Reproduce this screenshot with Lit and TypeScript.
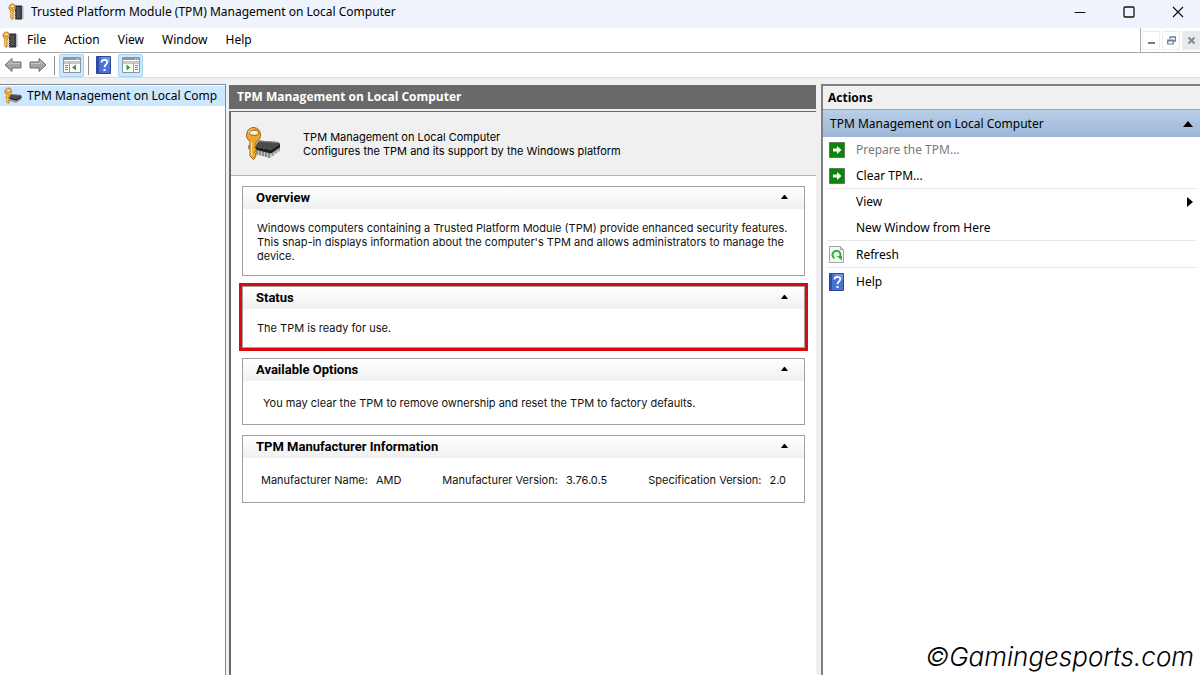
import { LitElement, html, css, svg, nothing } from "lit";
import { customElement, property, state } from "lit/decorators.js";

const key = svg`
  <path d="M9 1.500a7.500 7.500 0 0 0-4 13.800V30l3.500 3.500L11 30v-2l-1.500-1.500L11 24.500v-2L9.500 21 11 19.500v-3.700A7.500 7.500 0 0 0 9 1.500z" fill="#f0a62c" stroke="#9a6414" stroke-width="1"/>
  <path d="M6.500 16v13.500" stroke="#ffd98a" stroke-width="1.500"/>
  <path d="M3.500 7a5.500 5 0 0 1 5-4" fill="none" stroke="#ffe0a0" stroke-width="1.200"/>
  <ellipse cx="9" cy="6.800" rx="4.500" ry="2.600" fill="#f4efe4" stroke="#9a6414" stroke-width="1"/>`;

const keyChip = (size: number) => html`
  <svg width=${size} height=${size} viewBox="0 0 36 36" aria-hidden="true">
    <path d="M8 24l4 5 13 3 10-7v-3z" fill="#c4c4c4"/>
    <path d="M4 19v4M12 22v6M15 23v6M18 24v6M21 25v6M24 26v6" stroke="#777" stroke-width="1.500"/>
    <path d="M28 25v5M31 23v4M34 21v4" stroke="#8b8b8b" stroke-width="1.200"/>
    <path d="M14 14.500l19 1.500 2 1.500-9 6.500-16-3.500z" fill="#4a4a4d"/>
    <path d="M10 20.500l16 3.500 9-6.500v4l-9 6-16-4z" fill="#1f1f21"/>
    <path d="M14 15l19 1.500" stroke="#88888b"/>
    ${key}
  </svg>`;

const appIcon = html`
  <svg width="16" height="18" viewBox="0 0 32 36" aria-hidden="true">
    <path d="M14 5h14v28H14z" fill="#2b2b2d"/>
    <path d="M17 8h8v22h-8z" fill="#505054"/>
    <path d="M29 7v25" stroke="#77777a" stroke-width="4" stroke-dasharray="2 2"/>
    <path d="M14 18v14" stroke="#b4b4b4" stroke-width="3" stroke-dasharray="2 2"/>
    ${key}
  </svg>`;

const backArrow = html`
  <svg width="18" height="16" viewBox="0 0 18 16" aria-hidden="true">
    <path d="M1 8l7-6.500V5h9v6H8v3.500z" fill="#a3a3a3" stroke="#6f6f6f" stroke-linejoin="round"/>
    <path d="M3.500 7.500L7 4.200V6.500h9" fill="none" stroke="#c9c9c9"/>
  </svg>`;

const forwardArrow = html`
  <svg width="18" height="16" viewBox="0 0 18 16" aria-hidden="true">
    <path d="M17 8l-7-6.500V5H1v6h9v3.500z" fill="#a3a3a3" stroke="#6f6f6f" stroke-linejoin="round"/>
    <path d="M2 6.500h9V4.200l3.500 3.300" fill="none" stroke="#c9c9c9"/>
  </svg>`;

const paneIcon = (right: boolean) => html`
  <svg width="18" height="16" viewBox="0 0 18 16" aria-hidden="true">
    <path d="M.5.5h17v15H.5z" fill="#fff" stroke="#8d949c"/>
    <path d="M1 1h16v2H1z" fill="#8e969e"/>
    <path d="M13 2h1M15 2h1" stroke="#fff"/>
    <path d="M1 4.500h16" stroke="#c3c8ce"/>
    <path d="M1 6h16" stroke="#8d949c"/>
    ${right
      ? svg`<path d="M11.500 6v9" stroke="#8d949c"/>
          <path d="M13 8.500h3M13 10.500h3M13 12.500h3" stroke="#6f8296"/>
          <path d="M4.500 7.500v6L8.500 10.500z" fill="#2da32d"/>`
      : svg`<path d="M6.500 6v9" stroke="#8d949c"/>
          <path d="M2 8.500h3M2 10.500h3M2 12.500h3" stroke="#6f8296"/>
          <path d="M13 7.500v6L9 10.500z" fill="#2da32d"/>`}
  </svg>`;

const helpIcon = html`
  <svg width="15" height="18" viewBox="0 0 15 18" aria-hidden="true">
    <path d="M.5.5h14v17H.5z" fill="#4a72d6" stroke="#2c4796"/>
    <path d="M1 1h2v16H1z" fill="#2f4fae"/>
    <path d="M4 1h10v6z" fill="#6e92e8"/>
    <path d="M5.500 6.500C5.500 3 11.500 3.200 11.300 6.300c0 2-2.800 2.200-2.800 5" fill="none" stroke="#fff" stroke-width="1.800"/>
    <path d="M7.500 13h2v2h-2z" fill="#fff"/>
  </svg>`;

const goIcon = html`
  <svg width="16" height="16" viewBox="0 0 16 16" aria-hidden="true">
    <path d="M.5.5h15v15H.5z" fill="#0a860a" stroke="#5d7d5d"/>
    <path d="M4 6.500h4V4l4.500 4L8 12V9.500H4z" fill="#fff"/>
  </svg>`;

const refreshIcon = html`
  <svg width="15" height="17" viewBox="0 0 15 17" aria-hidden="true">
    <path d="M.5.5h11l3 3v13H.5z" fill="#f8f8f8" stroke="#a2a2a2"/>
    <path d="M11.500.5v3h3" fill="#ddd" stroke="#a2a2a2"/>
    <path d="M5.500 12.300A4 4 0 1 1 10.800 11" fill="none" stroke="#35b235" stroke-width="2"/>
    <path d="M7.500 10h5.500v4.500z" fill="#35b235"/>
  </svg>`;

@customElement("tpm-card")
export class TpmCard extends LitElement {
  @property() heading = "";
  @state() private open = true;

  static styles = css`
    :host { display: block; border: 1px solid #a0a0a0; background: #fff; }
    .head {
      display: flex; align-items: center; justify-content: space-between;
      height: 22px; padding: 0 16px 0 13px;
      background: linear-gradient(#fff, #f0f0f0);
    }
    .title { margin: 0; font: bold 13px/16px Roboto, "Liberation Sans", sans-serif; color: #000; }
    .toggle { display: flex; padding: 0 0 2px; border: 0; background: none; }
    .body { font: 11px/14px Inter, "Liberation Sans", sans-serif; color: #111; }
  `;

  render() {
    return html`
      <header class="head">
        <h2 class="title">${this.heading}</h2>
        <button class="toggle" aria-label="Toggle ${this.heading}" aria-expanded=${this.open}
          @click=${() => (this.open = !this.open)}>
          <svg width="7" height="4" viewBox="0 0 7 4" aria-hidden="true"><path d="M0 4l3-4h1l3 4z" fill="#000"/></svg>
        </button>
      </header>
      ${this.open ? html`<div class="body"><slot></slot></div>` : nothing}
    `;
  }
}

@customElement("app-root")
export class AppRoot extends LitElement {
  static styles = css`
    :host {
      display: flex; flex-direction: column; min-height: 100vh; position: relative;
      background: #f0f0f0; color: #000;
      font: 12px/16px "Noto Sans", "Open Sans", sans-serif;
    }
    * { box-sizing: border-box; }
    svg { display: block; flex: none; }
    button { font: inherit; color: inherit; margin: 0; padding: 0; border: 0; background: none; text-align: left; }

    .titlebar { display: flex; align-items: center; height: 28px; padding: 0 4px 4px 8px; gap: 7px; background: #eff3fb; }
    .apptitle { flex: 1; margin: 0; font-size: 12px; font-weight: 400; }
    .winbtn { display: grid; place-items: center; width: 36px; height: 24px; }
    .wins { display: flex; gap: 13px; }

    .menubar { display: flex; height: 25px; background: #fff; border-bottom: 1px solid #a8a8a8; }
    .menus { display: flex; align-items: center; flex: 1; padding-left: 2px; gap: 9px; }
    .menu { display: flex; gap: 18px; }
    .mdi { display: flex; align-items: center; gap: 2px; padding: 0 0 0 1px; border-left: 1px solid #a8a8a8; }
    .mdibtn { display: grid; place-items: center; width: 18px; height: 19px; border: 1px solid #ececec; }
    .mdibtn.off { background: #e9e9e9; }

    .toolbar { display: flex; align-items: center; height: 25px; padding: 0 4px; gap: 7px; background: #fff; border-bottom: 1px solid #dcdcdc; }
    .sep { width: 1px; height: 19px; background: #8f8f8f; }
    .tool { display: grid; place-items: center; height: 23px; }
    .tool.on { width: 25px; border: 1px solid #a5d3f5; border-radius: 2px; background: #cce8ff; }
    .group { display: flex; align-items: center; gap: 4px; }

    .panes { flex: 1; display: grid; grid-template-columns: 226px minmax(0, 1fr) 379px; padding-top: 6px; }
    .tree { border: solid #828790; border-width: 1px 1px 0 0; background: #fff; overflow: hidden; }
    .node { display: flex; align-items: center; gap: 5px; width: 100%; height: 20px; padding: 0 2px 0 4px; margin-top: 1px; background: #cce8ff; white-space: nowrap; overflow: hidden; }

    .center { display: flex; flex-direction: column; margin: 1px 5px 0 3px; }
    .caption { height: 24px; margin: 0; padding: 4px 8px; background: #696969; color: #fff; font: 700 12px/16px "Open Sans", "Noto Sans", sans-serif; }
    .result { flex: 1; margin-top: 2px; border: solid #696969; border-width: 1px 0 0 2px; background: #fff; }
    .banner { display: flex; align-items: center; gap: 22px; height: 64px; padding: 0 14px; background: #f0f0f0; border-bottom: 1px solid #b4b4b4; font: 11px/14px Inter, "Liberation Sans", sans-serif; }
    .banner p { margin: 0; }
    .cards { display: flex; flex-direction: column; gap: 10px; padding: 10px 11px; }
    .text { margin: 0; padding: 12px 6px 12px 14px; }
    .roomy { padding: 15px 6px 14px 20px; }
    .status { outline: 3px solid #dc0a0f; }
    .facts { display: flex; justify-content: space-between; margin: 0; padding: 15px 18px; }
    .fact { display: flex; gap: 8px; }
    .fact dd { margin: 0; }

    .actions { border: solid #808080; border-width: 2px 0 0 2px; background: #fff; }
    .acthead { height: 24px; margin: 0; padding: 4px 5px; background: #f0f0f0; border-bottom: 1px solid #a0a0a0; font: 700 12px/16px "Open Sans", "Noto Sans", sans-serif; }
    .section { display: flex; align-items: center; justify-content: space-between; width: 100%; height: 27px; padding: 0 7px; background: linear-gradient(#b9cfe8, #9bb6d6); }
    .list { margin: 0; padding: 0 4px 0 5px; list-style: none; }
    .list li { border-bottom: 1px solid transparent; }
    .list li.rule { border-color: #e6e6e6; }
    .list li.tall { padding-top: 1px; }
    .action { display: grid; grid-template-columns: 18px 1fr auto; align-items: center; gap: 9px; width: 100%; height: 25px; padding: 0 3px 0 1px; }
    .action:disabled { color: #7a7a7a; }
    .credit { position: absolute; right: 6px; bottom: 2px; margin: 0; font: italic 300 26px/32px Inter, sans-serif; }
  `;

  private actions = [
    { label: "Prepare the TPM...", icon: goIcon, disabled: true },
    { label: "Clear TPM...", icon: goIcon, rule: true },
    { label: "View", sub: true },
    { label: "New Window from Here", rule: true },
    { label: "Refresh", icon: refreshIcon, rule: true, tall: true },
    { label: "Help", icon: helpIcon, tall: true },
  ] as any[];

  private facts = [
    ["Manufacturer Name:", "AMD"],
    ["Manufacturer Version:", "3.76.0.5"],
    ["Specification Version:", "2.0"],
  ];

  render() {
    return html`
      <header class="titlebar">
        ${appIcon}
        <h1 class="apptitle">Trusted Platform Module (TPM) Management on Local Computer</h1>
        <div class="wins">
          <button class="winbtn" aria-label="Minimize"><svg width="12" height="12" viewBox="0 0 12 12"><path d="M.5 6.500h11" stroke="#111"/></svg></button>
          <button class="winbtn" aria-label="Maximize"><svg width="12" height="12" viewBox="0 0 12 12"><rect x="1" y="1" width="10" height="10" rx="1" fill="none" stroke="#111" stroke-width="1.300"/></svg></button>
          <button class="winbtn" aria-label="Close"><svg width="12" height="12" viewBox="0 0 12 12"><path d="M1 1l10 10M11 1L1 11" stroke="#111" stroke-width="1.200"/></svg></button>
        </div>
      </header>
      <div class="menubar">
        <div class="menus">
          ${appIcon}
          <nav class="menu">
            ${["File", "Action", "View", "Window", "Help"].map((m) => html`<button>${m}</button>`)}
          </nav>
        </div>
        <div class="mdi">
          <button class="mdibtn" aria-label="Minimize window"><svg width="9" height="9" viewBox="0 0 9 9"><path d="M1 7h7" stroke="#6a7f96" stroke-width="2"/></svg></button>
          <button class="mdibtn" aria-label="Restore window"><svg width="9" height="9" viewBox="0 0 9 9"><path d="M3 3V1h5.500v4H7" fill="none" stroke="#6a7f96" stroke-width="1.300"/><path d="M.7 4h5.600v4H.7zM.7 5h5.600" fill="none" stroke="#6a7f96" stroke-width="1.200"/></svg></button>
          <button class="mdibtn off" aria-label="Close window"><svg width="9" height="9" viewBox="0 0 9 9"><path d="M1.500 1.500l6 6M7.500 1.500l-6 6" stroke="#7c8a99" stroke-width="2"/></svg></button>
        </div>
      </div>
      <div class="toolbar">
        <button class="tool" aria-label="Back">${backArrow}</button>
        <button class="tool" aria-label="Forward">${forwardArrow}</button>
        <div class="group">
          <span class="sep"></span>
          <button class="tool on" aria-label="Show or hide console tree">${paneIcon(false)}</button>
          <span class="sep"></span>
        </div>
        <button class="tool" aria-label="Help">${helpIcon}</button>
        <button class="tool on" aria-label="Show or hide action pane">${paneIcon(true)}</button>
      </div>
      <div class="panes">
        <nav class="tree">
          <button class="node">${keyChip(18)}<span>TPM Management on Local Comp</span></button>
        </nav>
        <main class="center">
          <h2 class="caption">TPM Management on Local Computer</h2>
          <div class="result">
            <div class="banner">
              ${keyChip(36)}
              <div><p>TPM Management on Local Computer</p><p>Configures the TPM and its support by the Windows platform</p></div>
            </div>
            <div class="cards">
              <tpm-card heading="Overview">
                <p class="text">Windows computers containing a Trusted Platform Module (TPM) provide enhanced security features. This snap-in displays information about the computer's TPM and allows administrators to manage the device.</p>
              </tpm-card>
              <tpm-card class="status" heading="Status"><p class="text">The TPM is ready for use.</p></tpm-card>
              <tpm-card heading="Available Options"><p class="text roomy">You may clear the TPM to remove ownership and reset the TPM to factory defaults.</p></tpm-card>
              <tpm-card heading="TPM Manufacturer Information">
                <dl class="facts">${this.facts.map(([k, v]) => html`<div class="fact"><dt>${k}</dt><dd>${v}</dd></div>`)}</dl>
              </tpm-card>
            </div>
          </div>
        </main>
        <aside class="actions">
          <h2 class="acthead">Actions</h2>
          <button class="section"><span>TPM Management on Local Computer</span>
            <svg width="10" height="6" viewBox="0 0 10 6" aria-hidden="true"><path d="M0 6l5-6 5 6z"/></svg></button>
          <ul class="list">
            ${this.actions.map((a) => html`
              <li class="${a.rule ? "rule" : ""} ${a.tall ? "tall" : ""}">
                <button class="action" ?disabled=${a.disabled}>
                  <span>${a.icon ?? nothing}</span><span>${a.label}</span>
                  ${a.sub ? html`<svg width="6" height="10" viewBox="0 0 6 10" aria-hidden="true"><path d="M0 0l6 5-6 5z"/></svg>` : nothing}
                </button>
              </li>`)}
          </ul>
        </aside>
      </div>
      <p class="credit">©Gamingesports.com</p>
    `;
  }
}
